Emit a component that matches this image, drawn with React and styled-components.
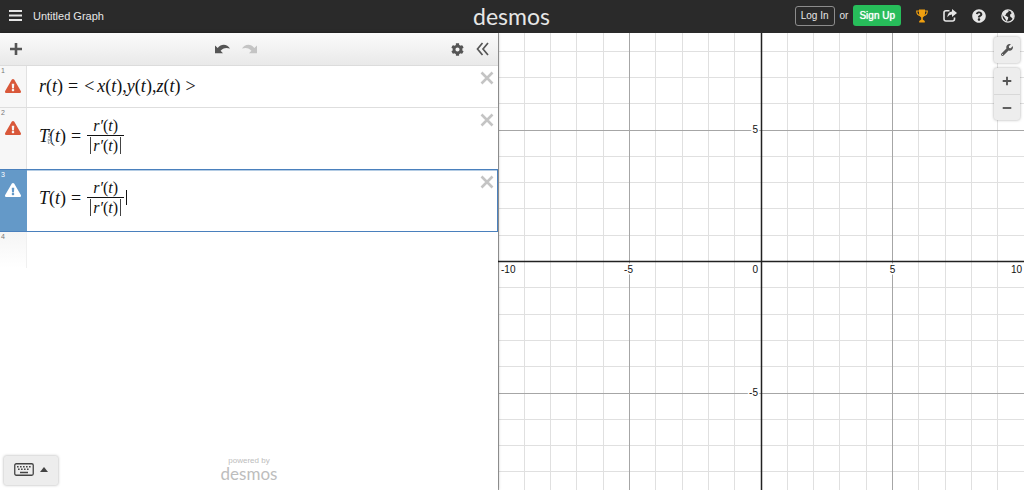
// package functions and components
import React, { useEffect, useRef, useState } from 'react';
import styled, { createGlobalStyle, css } from 'styled-components';
import {
  FaCog,
  FaExclamationTriangle,
  FaQuestionCircle,
  FaWrench,
} from 'react-icons/fa';

// constants
const UNITS_ACROSS = 20;
const MAJOR_STEP = 5;

const GlobalStyle = createGlobalStyle`
  * {
    box-sizing: border-box;
  }
  body {
    margin: 0;
    background: #fff;
    font-family: "Liberation Sans", Arial, sans-serif;
  }
  button {
    margin: 0;
    padding: 0;
    border: 0;
    background: none;
    color: inherit;
    font: inherit;
    cursor: pointer;
  }
  svg {
    display: block;
  }
`;

const Page = styled.div`
  display: flex;
  flex-direction: column;
  height: 100vh;
  overflow: hidden;
`;

const Header = styled.header`
  display: grid;
  grid-template-columns: 1fr auto 1fr;
  align-items: center;
  height: 33px;
  padding: 0 9px 2px 8px;
  background: #2a2a2a;
  color: #e6e6e6;
`;

const HeaderSide = styled.div`
  display: flex;
  align-items: center;
  justify-content: ${({ $end }) => ($end ? 'flex-end' : 'flex-start')};
  gap: ${({ $end }) => ($end ? '15px' : '10px')};
`;

const Title = styled.h1`
  margin: 0;
  font-size: 11px;
  font-weight: 400;
`;

const Logo = styled.span`
  font-family: Lato, sans-serif;
  font-size: ${({ $small }) => ($small ? '17px' : '23px')};
  line-height: ${({ $small }) => ($small ? '17px' : '28px')};
`;

const Account = styled.div`
  display: flex;
  align-items: center;
  gap: 5px;
  font-size: 10px;
`;

const AccountButton = styled.button`
  height: ${({ $primary }) => ($primary ? '21px' : '20px')};
  padding: 0 ${({ $primary }) => ($primary ? '6px' : '5px')};
  border-radius: 3px;
  ${({ $primary }) => $primary
    ? css`
        background: #27bd5a;
        color: #fff;
        text-shadow: 0 0 1px #fff;
      `
    : css`
        border: 1px solid #8c8c8c;
      `}
`;

const IconButton = styled.button`
  display: flex;
  align-items: center;
  justify-content: center;
  color: ${({ $color }) => $color || 'inherit'};
`;

const Workspace = styled.main`
  display: grid;
  grid-template-columns: 249fr 263fr;
  flex: 1;
  min-height: 0;
`;

const Sidebar = styled.section`
  z-index: 1;
  display: flex;
  flex-direction: column;
  min-width: 0;
  background: #fff;
  box-shadow: 0 0 3px rgba(0, 0, 0, 0.4);
`;

const Toolbar = styled.div`
  display: grid;
  grid-template-columns: 1fr auto 1fr;
  align-items: center;
  height: 33px;
  padding: 0 9px;
  border-bottom: 1px solid #dcdcdc;
  background: linear-gradient(#fbfbfb, #e9e9e9);
  color: #555;
`;

const ToolGroup = styled.div`
  display: flex;
  align-items: center;
  justify-content: ${({ $end }) => ($end ? 'flex-end' : 'flex-start')};
  gap: 12px;
`;

const HistoryGroup = styled(ToolGroup)`
  padding-right: 26px;
`;

const Expressions = styled.ol`
  flex: 1;
  margin: 0;
  padding: 0;
  list-style: none;
`;

const Row = styled.li`
  display: flex;
  border-bottom: 1px solid #dedede;
  ${({ $active }) => $active && css`
    margin-top: -1px;
    border-top: 1px solid #4a80bd;
    border-bottom-color: #4a80bd;
    box-shadow: inset -1px 0 #4a80bd, inset 0 1px #b4cce4;
  `}
`;

const Gutter = styled.div`
  display: flex;
  flex-direction: column;
  align-items: flex-start;
  flex: 0 0 27px;
  border-right: 1px solid ${({ $active }) => ($active ? '#6499c8' : '#e2e2e2')};
  background: ${({ $active }) => ($active ? '#6499c8' : '#f7f7f7')};
  color: ${({ $active }) => ($active ? '#fff' : '#d9583a')};
`;

const RowNumber = styled.span`
  display: block;
  padding: 1px 1px 0;
  color: ${({ $active }) => ($active ? '#fff' : '#777')};
  font-size: 7px;
  line-height: 8px;
`;

const Warning = styled(FaExclamationTriangle)`
  align-self: center;
  width: 16px;
  height: 16px;
  margin-top: 3px;
`;

const MathField = styled.div`
  position: relative;
  display: flex;
  align-items: center;
  flex: 1;
  padding: ${({ $tall }) => ($tall ? '9px 12px 15px' : '10px 12px 11px')};
  color: #111;
  font-family: "Liberation Serif", "Times New Roman", serif;
  font-size: 18px;
  line-height: 20px;
`;

const Variable = styled.i`
  font-style: italic;
`;

const Operator = styled.span`
  padding: 0 ${({ $end }) => ($end ? '0' : '6px')} 0 5px;
`;

const OpenAngle = styled.span`
  padding-right: 3px;
`;

const Fraction = styled.span`
  display: inline-flex;
  flex-direction: column;
  align-items: center;
  font-size: 16px;
  line-height: 18px;
`;

const Numerator = styled.span`
  width: 100%;
  border-bottom: 1px solid #111;
  text-align: center;
`;

const Denominator = styled.span`
  margin: 1px 3px 0;
  padding: 0 2px;
  border: solid #444;
  border-width: 0 1px;
  line-height: 17px;
`;

const Caret = styled.span`
  width: 1px;
  height: 15px;
  margin-left: 2px;
  background: #111;
`;

// mouse pointer resting over the formula
const Pointer = styled.svg`
  position: absolute;
  top: 18px;
  left: 19px;
`;

const DeleteButton = styled(IconButton)`
  align-self: flex-start;
  padding: 5px 4px;
  color: #c4c4c4;
`;

const NextRow = styled.li`
  width: 27px;
  height: 36px;
  border-right: 1px solid #f0f0f0;
  background: linear-gradient(#f5f5f5, #fff);
`;

const SidebarFooter = styled.footer`
  display: grid;
  grid-template-columns: 1fr auto 1fr;
  align-items: end;
  padding: 0 4px 5px;
`;

const KeypadButton = styled.button`
  display: flex;
  align-items: center;
  justify-content: center;
  justify-self: start;
  gap: 6px;
  width: 54px;
  height: 29px;
  padding-bottom: 2px;
  border-radius: 2px;
  background: #ededed;
  box-shadow: 0 0 3px rgba(0, 0, 0, 0.35);
  color: #444;
`;

const PoweredBy = styled.div`
  display: flex;
  flex-direction: column;
  align-items: center;
  padding-bottom: 3px;
  color: #bdbdbd;
  font-size: 8px;
  line-height: 9px;
`;

const GraphPaper = styled.section`
  position: relative;
  min-width: 0;
  overflow: hidden;
`;

const Plot = styled.svg`
  width: 100%;
  height: 100%;
  font-family: "Liberation Sans", Arial, sans-serif;
  font-size: 10px;
`;

// floats over the graph paper
const GraphControls = styled.div`
  position: absolute;
  top: 4px;
  right: 4px;
  display: flex;
  flex-direction: column;
  gap: 5px;
`;

const ControlGroup = styled.div`
  border-radius: 3px;
  background: #ededed;
  box-shadow: 0 0 3px rgba(0, 0, 0, 0.35);
  color: #555;
`;

const ControlButton = styled(IconButton)`
  width: 26px;
  height: 26px;

  & + & {
    border-top: 1px solid #d8d8d8;
  }
`;

// icons
const MenuIcon = () => (
  <svg width="15" height="13" viewBox="0 0 15 13" stroke="currentColor" strokeWidth="2">
    <path d="M1 2h13M1 6.5h13M1 11h13" />
  </svg>
);

const PlusIcon = ({ size = 14 }) => (
  <svg width={size} height={size} viewBox="0 0 14 14" stroke="currentColor" strokeWidth="2.6">
    <path d="M1 7h12M7 1v12" />
  </svg>
);

const MinusIcon = () => (
  <svg width="10" height="10" viewBox="0 0 14 14" stroke="currentColor" strokeWidth="2.6">
    <path d="M1 7h12" />
  </svg>
);

const UndoIcon = ({ flipped }) => (
  <svg width="15" height="10" viewBox="0 0 15 10" fill="currentColor">
    <path
      transform={flipped ? 'matrix(-1 0 0 1 15 0)' : undefined}
      d="M0 1.5V9.2h8L5.6 6.8C7.5 4.2 11 3.2 15 4.6C12.5 .2 6.5 -.8 2.7 3.9Z"
    />
  </svg>
);

const CollapseIcon = () => (
  <svg width="13" height="14" viewBox="0 0 13 14" fill="none" stroke="currentColor" strokeWidth="1.7">
    <path d="M6.5 1L1.5 7l5 6M12 1L7 7l5 6" />
  </svg>
);

const CloseIcon = () => (
  <svg width="14" height="14" viewBox="0 0 14 14" stroke="currentColor" strokeWidth="2.6">
    <path d="M1.5 1.5l11 11M12.5 1.5l-11 11" />
  </svg>
);

const TrophyIcon = () => (
  <svg width="12" height="14" viewBox="0 0 12 14" fill="currentColor">
    <path d="M3 .5h6v4Q9 7.5 6.8 8.5V10.5L8.8 12v1.5H3.2V12l2-1.5V8.5Q3 7.5 3 4.5Z" />
    <path d="M3 2H.7Q.7 6 4 6.5M9 2h2.3Q11.3 6 8 6.5" fill="none" stroke="currentColor" strokeWidth="1.1" />
  </svg>
);

const ShareIcon = () => (
  <svg width="14" height="13" viewBox="0 0 14 13" fill="none" stroke="currentColor" strokeWidth="1.6">
    <path d="M6.5 1.8H3Q1 1.8 1 3.8V10q0 2 2 2h6.5q2 0 2-2V8.5" />
    <path d="M9 0l5 4-5 4V5.6Q6 5.5 4.3 8.3Q4.6 2.7 9 2.4Z" fill="currentColor" stroke="none" />
  </svg>
);

const GlobeIcon = () => (
  <svg width="14" height="14" viewBox="0 0 14 14" fill="currentColor">
    <circle cx="7" cy="7" r="6.1" fill="none" stroke="currentColor" strokeWidth="1.3" />
    <path d="M1.3 4.3Q3 1.2 6.3 1L7.8 2.2L6.6 3.6L5.4 4.2L4.8 5.8L3.6 6.2L5.2 7.1L7.3 8.3L6.9 10.3L5.7 12.6L4.6 10.2L3.3 8.2L1.5 6.2Z" />
    <path d="M9.6 2L12.3 4.4L13 7.6L11.8 10L10.5 8.5L9 7.3L9.3 5.3L10.6 4.5Z" />
  </svg>
);

const KeyboardIcon = () => (
  <svg width="20" height="13" viewBox="0 0 20 13" fill="none" stroke="currentColor">
    <rect x=".75" y=".75" width="18.5" height="11.5" rx="1.5" strokeWidth="1.3" />
    <path d="M3 3.7h14M4 6.3h12" strokeWidth="1.4" strokeDasharray="1.6 1.4" />
    <path d="M6 9.5h8" strokeWidth="1.5" />
  </svg>
);

const UpIcon = () => (
  <svg width="8" height="5" viewBox="0 0 8 5" fill="currentColor">
    <path d="M0 5L4 0l4 5z" />
  </svg>
);

const PointerIcon = () => (
  <Pointer width="8" height="20" viewBox="0 0 8 20" fill="none">
    <path d="M3 10v7" stroke="#fff" strokeWidth="3" />
    <path d="M3 4v13" stroke="#777" strokeDasharray="2 1" />
    <path d="M2 13l4 3.5H4L2.5 18z" fill="#fff" stroke="#999" strokeWidth=".8" />
  </Pointer>
);

// name applied to t, e.g. r(t)
const Call = ({ name }) => (
  <span><Variable>{name}</Variable>(<Variable>t</Variable>)</span>
);

const PositionVector = () => (
  <>
    <Call name="r" />
    <Operator>=</Operator>
    <OpenAngle>&lt;</OpenAngle>
    <Call name="x" />,
    <Call name="y" />,
    <Call name="z" />
    <Operator $end>&gt;</Operator>
  </>
);

const UnitTangent = () => (
  <>
    <Call name="T" />
    <Operator>=</Operator>
    <Fraction>
      <Numerator><Call name="r′" /></Numerator>
      <Denominator><Call name="r′" /></Denominator>
    </Fraction>
  </>
);

const expressions = [
  { id: 1, Formula: PositionVector },
  { id: 2, Formula: UnitTangent, tall: true, hovered: true },
  { id: 3, Formula: UnitTangent, tall: true, active: true },
];

const Expression = ({ id, Formula, tall, active, hovered }) => (
  <Row $active={active}>
    <Gutter $active={active}>
      <RowNumber $active={active}>{id}</RowNumber>
      <Warning />
    </Gutter>
    <MathField $tall={tall}>
      <Formula />
      {active && <Caret />}
      {hovered && <PointerIcon />}
    </MathField>
    <DeleteButton aria-label={`Delete expression ${id}`}><CloseIcon /></DeleteButton>
  </Row>
);

const Graph = () => {
  const ref = useRef(null);
  const [{ width, height }, setSize] = useState({ width: 0, height: 0 });

  useEffect(() => {
    const observer = new ResizeObserver(([entry]) => setSize({
      width: entry.contentRect.width,
      height: entry.contentRect.height,
    }));
    observer.observe(ref.current);
    return () => observer.disconnect();
  }, []);

  const unit = width / UNITS_ACROSS;
  const cx = width / 2;
  const cy = height / 2;
  const lines = [];
  for (let n = -UNITS_ACROSS / 2; n <= UNITS_ACROSS / 2; n++) {
    if (n !== 0) lines.push(n);
  }
  const isMajor = (n) => n % MAJOR_STEP === 0;
  const lineColor = (n) => (isMajor(n) ? '#a6a6a6' : '#e0e0e0');
  const snap = (value) => Math.floor(value) + 0.5;
  // major lines are drawn last so they stay on top
  const sorted = [...lines.filter((n) => !isMajor(n)), ...lines.filter(isMajor)];
  const halo = { stroke: '#fff', strokeWidth: 3, paintOrder: 'stroke', fill: '#111' };

  return (
    <GraphPaper ref={ref}>
      {width > 0 &&
        <Plot role="img" aria-label="Graph paper">
          {sorted.map((n) => (
            <g key={n} stroke={lineColor(n)}>
              <path d={`M${snap(cx + n * unit)} 0V${height}`} />
              <path d={`M0 ${snap(cy - n * unit)}H${width}`} />
            </g>
          ))}
          <path d={`M0 ${snap(cy)}H${width}M${snap(cx)} 0V${height}`} stroke="#222" strokeWidth="1.5" />
          <text x="3" y={cy + 11} {...halo}>-10</text>
          <text x={cx - 5 * unit - 1} y={cy + 11} textAnchor="middle" {...halo}>-5</text>
          <text x={cx - 3} y={cy + 11} textAnchor="end" {...halo}>0</text>
          <text x={cx + 5 * unit} y={cy + 11} textAnchor="middle" {...halo}>5</text>
          <text x={width - 2} y={cy + 11} textAnchor="end" {...halo}>10</text>
          <text x={cx - 3} y={cy - 5 * unit + 3} textAnchor="end" {...halo}>5</text>
          <text x={cx - 3} y={cy + 5 * unit + 3} textAnchor="end" {...halo}>-5</text>
        </Plot>
      }
      <GraphControls>
        <ControlGroup>
          <ControlButton aria-label="Graph settings"><FaWrench size={12} /></ControlButton>
        </ControlGroup>
        <ControlGroup>
          <ControlButton aria-label="Zoom in"><PlusIcon size={10} /></ControlButton>
          <ControlButton aria-label="Zoom out"><MinusIcon /></ControlButton>
        </ControlGroup>
      </GraphControls>
    </GraphPaper>
  );
};

const App = () => (
  <Page>
    <GlobalStyle />
    <Header>
      <HeaderSide>
        <IconButton aria-label="Menu"><MenuIcon /></IconButton>
        <Title>Untitled Graph</Title>
      </HeaderSide>
      <Logo>desmos</Logo>
      <HeaderSide $end>
        <Account>
          <AccountButton>Log In</AccountButton>
          or
          <AccountButton $primary>Sign Up</AccountButton>
        </Account>
        <IconButton aria-label="Art contest" $color="#f0a010"><TrophyIcon /></IconButton>
        <IconButton aria-label="Share graph"><ShareIcon /></IconButton>
        <IconButton aria-label="Help"><FaQuestionCircle size={14} /></IconButton>
        <IconButton aria-label="Language"><GlobeIcon /></IconButton>
      </HeaderSide>
    </Header>

    <Workspace>
      <Sidebar>
        <Toolbar>
          <ToolGroup>
            <IconButton aria-label="Add item"><PlusIcon /></IconButton>
          </ToolGroup>
          <HistoryGroup>
            <IconButton aria-label="Undo"><UndoIcon /></IconButton>
            <IconButton aria-label="Redo" $color="#c4c4c4"><UndoIcon flipped /></IconButton>
          </HistoryGroup>
          <ToolGroup $end>
            <IconButton aria-label="Edit list"><FaCog size={13} /></IconButton>
            <IconButton aria-label="Hide list"><CollapseIcon /></IconButton>
          </ToolGroup>
        </Toolbar>

        <Expressions>
          {expressions.map((expression) => <Expression key={expression.id} {...expression} />)}
          <NextRow>
            <RowNumber>4</RowNumber>
          </NextRow>
        </Expressions>

        <SidebarFooter>
          <KeypadButton aria-label="Show keypad">
            <KeyboardIcon />
            <UpIcon />
          </KeypadButton>
          <PoweredBy>
            powered by
            <Logo $small>desmos</Logo>
          </PoweredBy>
        </SidebarFooter>
      </Sidebar>
      <Graph />
    </Workspace>
  </Page>
);

export default App;
